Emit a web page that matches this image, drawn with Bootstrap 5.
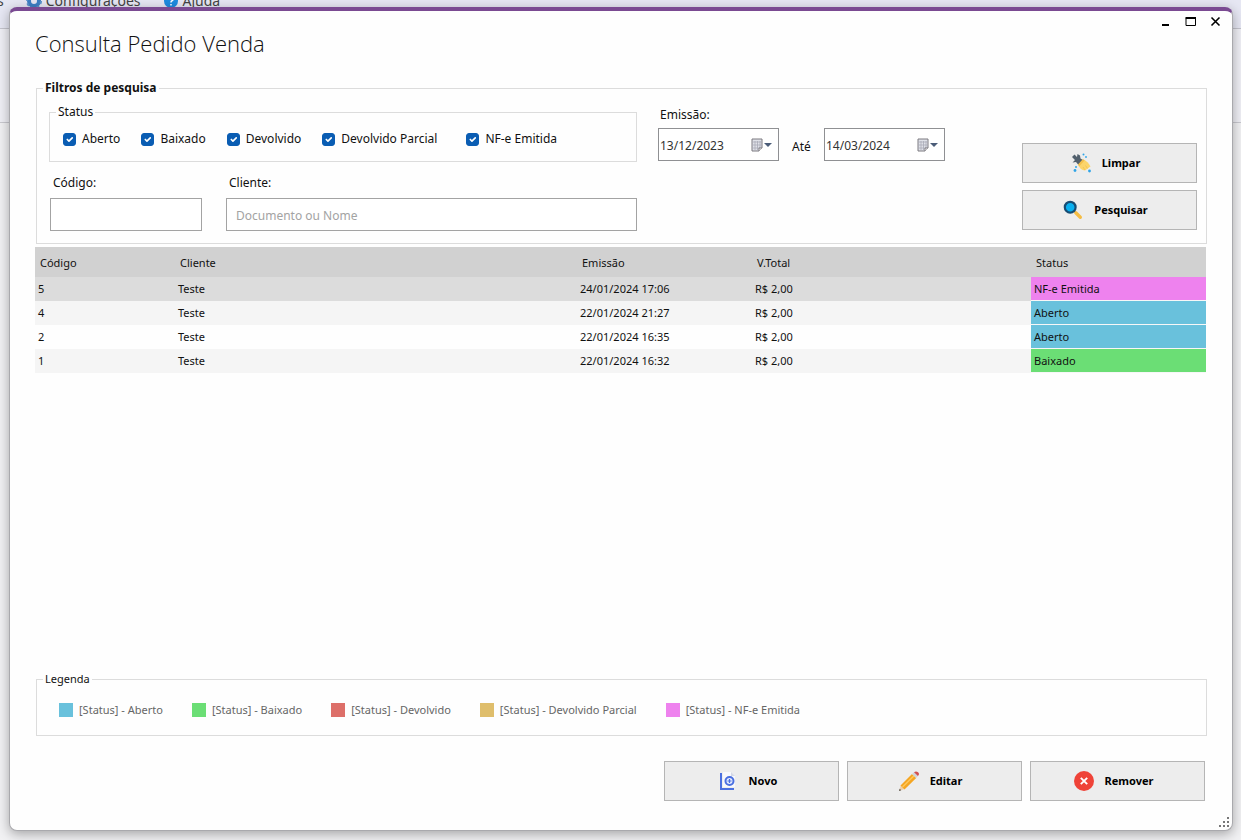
<!DOCTYPE html>
<html lang="pt-BR">
<head>
<meta charset="utf-8">
<meta name="viewport" content="width=device-width, initial-scale=1">
<title>Consulta Pedido Venda</title>
<link href="https://cdn.jsdelivr.net/npm/bootstrap@5.3.0/dist/css/bootstrap.min.css" rel="stylesheet">
<style>
  body { font-family: "Noto Sans", "Open Sans", sans-serif; font-size: 12px; line-height: 18px; color: #111; background: #f1f1f3; }
  a, button { color: inherit; }

  /* application window behind the dialog */
  .app-back { position: absolute; inset: 0; overflow: hidden; z-index: -1; }
  .app-menu { display: flow-root; height: 29px; background: #e6e7f3; border-bottom: 1px solid #c3c3cc; font-size: 14px; line-height: 20px; color: #444; }
  .app-menu ul { margin-top: -9px; gap: 22px; }
  .app-menu li { gap: 4px; }
  .app-menu li:first-child { margin-left: -3px; }
  .app-menu a { text-decoration: none; }
  .app-ribbon { height: 94px; background: #efeff5; border-bottom: 1px solid #c9c9cf; }

  .dialog-win { margin: 7px 8px 9px 9px; min-height: calc(100vh - 16px); background: #fefefe; border: 1px solid #a9a9ad; border-top: 4px solid #7a4a92; border-radius: 8px; box-shadow: 0 3px 12px rgba(0,0,0,.32); }
  .win-head { padding: 0 4px 0 25px; }
  .win-title { font-family: "Open Sans", "Noto Sans", sans-serif; font-size: 22px; font-weight: 300; line-height: 32px; margin: 16px 0 21px; color: #111; }
  .win-ctl { width: 25px; height: 21px; padding: 0; border: 0; background: none; }
  .win-body { padding: 0 25px 29px 25px; }

  .group-box { border: 1px solid #dcdcdc; }
  .group-box > legend { float: none; width: auto; padding: 0 2px; font-size: 12px; line-height: 16px; }
  .outer-box { margin-left: 1px; }
  .filters { padding: 0 9px 12px 12px; }
  .filters > legend { margin: 0 0 0 -6px; font-weight: 700; }
  .filters-left { flex: 0 1 588px; margin: 8px 21px 0 0; }
  .status-box { padding: 9px 13px 12px; margin-bottom: 12px; }
  .status-box > legend { margin: 0 0 0 -7px; }
  .status-list { gap: 0 21px; }
  .check-item { gap: 6px; line-height: 20px; }
  .check-item .form-check-input { width: 13px; height: 13px; margin: 0; border-radius: 3px; flex: none; }
  .check-item .form-check-input:checked { background-color: #0a5db3; border-color: #0a5db3; }
  .field-row { padding-left: 1px; }
  .field-label { display: block; margin: 0 0 6px 3px; }
  .field-box { height: 33px; border: 1px solid #a3a3a3; border-radius: 0; font-size: 12px; padding: 1px 9px 0; background: #fff; color: #111; }
  .field-box::placeholder { color: #a3a3a3; }
  .field-code { width: 152px; margin-right: 24px; }
  .dates { margin-top: 10px; }
  .dates .field-label { margin: 0 0 4px 2px; }
  .date-box { width: 121px; height: 33px; border: 1px solid #8f9093; background: #fff; padding: 0 6px 0 1px; }
  .date-box input { width: 80px; border: 0; padding: 2px 0 0; background: none; color: #333; }
  .date-box button { border: 0; padding: 0; background: none; display: flex; }
  .date-sep { width: 45px; text-align: center; line-height: 37px; }
  .actions { gap: 7px; margin-bottom: 1px; }
  .btn-win { width: 175px; height: 40px; border: 1px solid #b5b5b5; border-radius: 0; background: #ededed; color: #000; font-size: 11px; font-weight: 700; line-height: 18px; padding: 0 8px 0 0; display: flex; align-items: center; justify-content: center; gap: 11px; }
  .btn-win:hover { background: #e2e2e2; border-color: #999; }

  .orders-wrap { padding: 3px 1px 0 0; }
  .orders { width: 100%; table-layout: fixed; font-size: 11px; line-height: 16px; border-collapse: separate; border-spacing: 0; }
  .orders th { height: 30px; padding: 2px 5px 0; background: #d1d1d1; font-weight: 400; }
  .orders td { height: 24px; padding: 0 3px; }
  .orders tbody tr:nth-child(even) { background: #f5f5f5; }
  .orders tbody tr.is-current { background: #dcdcdc; }
  .orders td:last-child { border-bottom: 1px solid #f7f7f7; }
  .col-code { width: 140px; } .col-date, .col-status { width: 175px; } .col-total { width: 279px; }

  .st-open { background: #69c1dc; }
  .st-closed { background: #6bde75; }
  .st-returned { background: #dd6f69; }
  .st-partial { background: #dfbe6c; }
  .st-invoiced { background: #ee82ee; }
  .legend-box { padding: 13px 22px 15px; margin-bottom: 25px; }
  .legend-box > legend { margin: 0 0 0 -16px; font-size: 11px; }
  .legend-list { gap: 0 29px; font-size: 11px; line-height: 20px; color: #666; }
  .swatch { width: 14px; height: 14px; margin-right: 6px; }
  .foot { gap: 8px; margin-right: 2px; }
  .grip { position: absolute; right: 3px; bottom: 3px; }
</style>
</head>
<body>
<div class="app-back">
  <nav class="app-menu" aria-label="Menu principal">
    <ul class="list-unstyled d-flex mb-0">
      <li><a href="#">s</a></li>
      <li class="d-flex align-items-center">
        <svg width="16" height="16" viewBox="0 0 16 16"><circle cx="8" cy="8" r="5" fill="none" stroke="#3c7fc4" stroke-width="4"/><circle cx="8" cy="8" r="7" fill="none" stroke="#5b93cc" stroke-width="2" stroke-dasharray="3 2.5"/></svg>
        <a href="#">Configurações</a></li>
      <li class="d-flex align-items-center">
        <svg width="16" height="16" viewBox="0 0 16 16"><circle cx="8" cy="8" r="7" fill="#1d8be0"/><path d="M6 6a2 2 0 1 1 2.600 2Q8 8.300 8 9.500M8 11v1.500" fill="none" stroke="#fff" stroke-width="1.500"/></svg>
        <a href="#">Ajuda</a></li>
    </ul>
  </nav>
  <div class="app-ribbon"></div>
</div>

<main class="dialog-win position-relative d-flex flex-column">
  <header class="win-head d-flex justify-content-between align-items-start">
    <h1 class="win-title">Consulta Pedido Venda</h1>
    <div class="d-flex">
      <button class="win-ctl" type="button" aria-label="Minimizar"><svg class="d-block mx-auto" width="13" height="13" viewBox="0 0 13 13"><path d="M3 10h7" stroke="#000" stroke-width="2"/></svg></button>
      <button class="win-ctl" type="button" aria-label="Maximizar"><svg class="d-block mx-auto" width="13" height="13" viewBox="0 0 13 13"><path d="M2 3.500h9.500v7H2z" fill="none" stroke="#000"/><path d="M1.500 3H12" stroke="#000" stroke-width="2"/></svg></button>
      <button class="win-ctl" type="button" aria-label="Fechar"><svg class="d-block mx-auto" width="13" height="13" viewBox="0 0 13 13"><path d="M2.500 2.500l8 8M10.500 2.500l-8 8" stroke="#000" stroke-width="1.600"/></svg></button>
    </div>
  </header>

  <div class="win-body d-flex flex-column flex-grow-1">
    <form>
      <fieldset class="group-box outer-box filters">
        <legend>Filtros de pesquisa</legend>
        <div class="d-flex align-items-start">
          <div class="filters-left">
            <fieldset class="group-box status-box">
              <legend>Status</legend>
              <div class="status-list d-flex flex-wrap">
                <div class="check-item d-flex align-items-center"><input class="form-check-input" type="checkbox" id="s1" checked><label for="s1">Aberto</label></div>
                <div class="check-item d-flex align-items-center"><input class="form-check-input" type="checkbox" id="s2" checked><label for="s2">Baixado</label></div>
                <div class="check-item d-flex align-items-center"><input class="form-check-input" type="checkbox" id="s3" checked><label for="s3">Devolvido</label></div>
                <div class="check-item d-flex align-items-center me-2"><input class="form-check-input" type="checkbox" id="s4" checked><label for="s4">Devolvido Parcial</label></div>
                <div class="check-item d-flex align-items-center"><input class="form-check-input" type="checkbox" id="s5" checked><label for="s5">NF-e Emitida</label></div>
              </div>
            </fieldset>
            <div class="field-row d-flex">
              <div class="field-code">
                <label class="field-label" for="codigo">Código:</label>
                <input class="field-box w-100" type="text" id="codigo">
              </div>
              <div class="flex-grow-1">
                <label class="field-label" for="cliente">Cliente:</label>
                <input class="field-box w-100" type="text" id="cliente" placeholder="Documento ou Nome">
              </div>
            </div>
          </div>

          <div class="dates">
            <label class="field-label" for="de">Emissão:</label>
            <div class="d-flex">
              <div class="date-box d-flex align-items-center justify-content-between">
                <input type="text" id="de" value="13/12/2023">
                <button type="button" aria-label="Abrir calendário inicial"><svg width="21" height="14" viewBox="0 0 21 14"><path d="M1 1h10v9l-3 3H1z" fill="#dfe1e8" stroke="#7d7a80"/><path d="M1 4h10M1 7h10M1 10h8M4 3v9M6.500 3v9M9 3v7" stroke="#a9abb8" stroke-width=".8"/><path d="M8 13v-3h3" fill="#fff" stroke="#7d7a80"/><path d="M13 5h8l-4 4z" fill="#4b5c78"/></svg></button>
              </div>
              <label class="date-sep" for="ate">Até</label>
              <div class="date-box d-flex align-items-center justify-content-between">
                <input type="text" id="ate" value="14/03/2024">
                <button type="button" aria-label="Abrir calendário final"><svg width="21" height="14" viewBox="0 0 21 14"><path d="M1 1h10v9l-3 3H1z" fill="#dfe1e8" stroke="#7d7a80"/><path d="M1 4h10M1 7h10M1 10h8M4 3v9M6.500 3v9M9 3v7" stroke="#a9abb8" stroke-width=".8"/><path d="M8 13v-3h3" fill="#fff" stroke="#7d7a80"/><path d="M13 5h8l-4 4z" fill="#4b5c78"/></svg></button>
              </div>
            </div>
          </div>

          <div class="actions d-flex flex-column ms-auto align-self-end">
            <button class="btn btn-win" type="reset">
              <svg width="20" height="20" viewBox="0 0 20 20"><path d="M1 4l2.500-2.500L6 4l.5-3L9 2.500l.5 3L12 7l-4.500 5L5 9l-3.500.5L4 7z" fill="#52606d"/><path d="M7.500 12L12.500 6.500Q17 8.500 19.500 13.500L14 17.500Q9 17 7.500 12z" fill="#fbd56b"/><path d="M7 11.500L12 6l1.500 1.500-5.500 6z" fill="#f3c04c"/><path d="M12 14l2 3M14.500 12.500l2 3" stroke="#f3c04c" stroke-width=".8"/><circle cx="12.500" cy="1.500" r="1" fill="#2fa4e7"/><circle cx="15" cy="4" r=".9" fill="#2fa4e7"/><circle cx="5" cy="14" r="1" fill="#2fa4e7"/><circle cx="4" cy="17.500" r="1.400" fill="#2fa4e7"/><circle cx="18.500" cy="18" r="1.400" fill="#2fa4e7"/></svg>
              Limpar</button>
            <button class="btn btn-win" type="submit">
              <svg width="20" height="20" viewBox="0 0 20 20"><path d="M10.500 10.500l4 4" stroke="#345" stroke-width="1.600"/><path d="M12.800 12.800l4.500 4.500" stroke="#f5bd45" stroke-width="3.400" stroke-linecap="round"/><circle cx="7.200" cy="7.200" r="5.400" fill="#09b0f0" stroke="#174d74" stroke-width="2.200"/></svg>
              Pesquisar</button>
          </div>
        </div>
      </fieldset>
    </form>

    <div class="orders-wrap flex-grow-1">
      <table class="orders">
        <colgroup><col class="col-code"><col><col class="col-date"><col class="col-total"><col class="col-status"></colgroup>
        <thead><tr><th scope="col">Código</th><th scope="col">Cliente</th><th scope="col">Emissão</th><th scope="col">V.Total</th><th scope="col">Status</th></tr></thead>
        <tbody>
          <tr class="is-current"><td>5</td><td>Teste</td><td>24/01/2024 17:06</td><td>R$ 2,00</td><td class="st-invoiced">NF-e Emitida</td></tr>
          <tr><td>4</td><td>Teste</td><td>22/01/2024 21:27</td><td>R$ 2,00</td><td class="st-open">Aberto</td></tr>
          <tr><td>2</td><td>Teste</td><td>22/01/2024 16:35</td><td>R$ 2,00</td><td class="st-open">Aberto</td></tr>
          <tr><td>1</td><td>Teste</td><td>22/01/2024 16:32</td><td>R$ 2,00</td><td class="st-closed">Baixado</td></tr>
        </tbody>
      </table>
    </div>

    <fieldset class="group-box outer-box legend-box">
      <legend>Legenda</legend>
      <ul class="legend-list list-unstyled d-flex flex-wrap mb-0">
        <li class="d-flex align-items-center"><span class="swatch st-open"></span>[Status] - Aberto</li>
        <li class="d-flex align-items-center"><span class="swatch st-closed"></span>[Status] - Baixado</li>
        <li class="d-flex align-items-center"><span class="swatch st-returned"></span>[Status] - Devolvido</li>
        <li class="d-flex align-items-center"><span class="swatch st-partial"></span>[Status] - Devolvido Parcial</li>
        <li class="d-flex align-items-center"><span class="swatch st-invoiced"></span>[Status] - NF-e Emitida</li>
      </ul>
    </fieldset>

    <div class="foot d-flex justify-content-end">
      <button class="btn btn-win" type="button">
        <svg width="20" height="20" viewBox="0 0 20 20"><path d="M5 1h8l4 4v11H5z" fill="#f7f8fc"/><path d="M13 1l4 4h-4z" fill="#d5d9e6"/><path d="M3 2v16h13" fill="none" stroke="#4a6fe0" stroke-width="2"/><circle cx="11.500" cy="10" r="4" fill="#e9eefc" stroke="#4a6fe0" stroke-width="2"/><path d="M11.500 8v4M9.500 10h4" stroke="#4a6fe0" stroke-width="1.200"/></svg>
        Novo</button>
      <button class="btn btn-win" type="button">
        <svg width="20" height="20" viewBox="0 0 20 20"><path d="M0 20l1.800-5.500L5.500 18z" fill="#efcfa8"/><path d="M0 20l.7-2.200 1.500 1.500z" fill="#444"/><path d="M1.500 14.500L13 3l4.200 4L5.500 18.500z" fill="#f5a623"/><path d="M3.500 16L15 4.700" stroke="#ffc95c" stroke-width="1.300"/><path d="M13 3L15 1.300 18.900 5l-1.700 2z" fill="#cfd5da"/><path d="M15 1.300Q17-.3 19 1.300T18.900 5z" fill="#d2504f"/></svg>
        Editar</button>
      <button class="btn btn-win" type="button">
        <svg width="20" height="20" viewBox="0 0 20 20"><circle cx="10" cy="10" r="10" fill="#ef4338"/><path d="M6.800 6.800l6.400 6.400M13.200 6.800l-6.400 6.400" stroke="#fff" stroke-width="1.900"/></svg>
        Remover</button>
    </div>
  </div>
  <svg class="grip" width="10" height="10" viewBox="0 0 10 10" fill="#777"><path d="M8 0h2v2H8zM4 4h2v2H4zM8 4h2v2H8zM0 8h2v2H0zM4 8h2v2H4zM8 8h2v2H8z"/></svg>
</main>
<script src="https://cdn.jsdelivr.net/npm/bootstrap@5.3.0/dist/js/bootstrap.bundle.min.js"></script>
</body>
</html>
